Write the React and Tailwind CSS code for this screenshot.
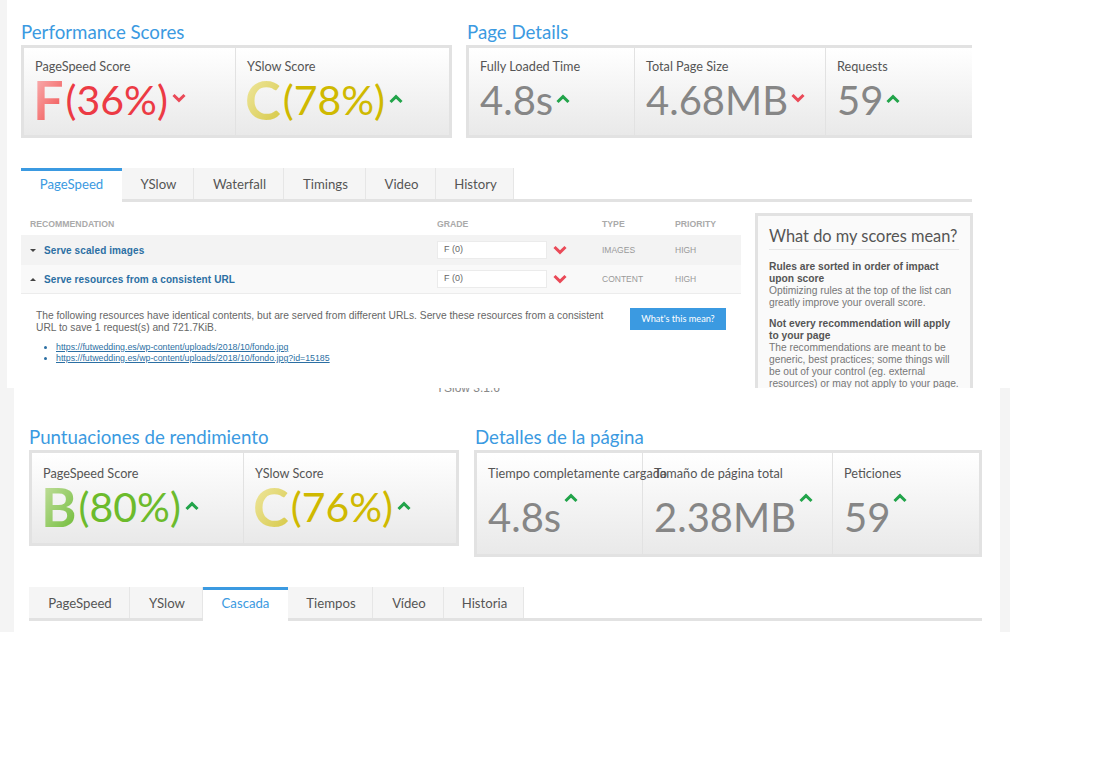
const head = { fontFamily: 'Lato, "Noto Sans", sans-serif' };
const body = { fontFamily: '"Liberation Sans", Arial, sans-serif' };

function Up({ className = "" }) {
  return (
    <svg width="14" height="10" viewBox="0 0 14 10" className={className}>
      <path d="M1.5 8 L7 2.6 L12.5 8" fill="none" stroke="#22a44a" strokeWidth="3" />
    </svg>
  );
}
function Down({ className = "" }) {
  return (
    <svg width="14" height="10" viewBox="0 0 14 10" className={className}>
      <path d="M1.5 2 L7 7.4 L12.5 2" fill="none" stroke="#ea4a58" strokeWidth="3" />
    </svg>
  );
}

function Cell({ w, label, children, last, low }) {
  return (
    <div className={`${w} shrink-0 pl-[11px] ${low ? "pt-[10px]" : "pt-[8px]"} ${last ? "" : "border-r border-[#e2e2e2]"}`}>
      <div className="text-[12.7px] leading-[20px] text-[#555] whitespace-nowrap font-normal">{label}</div>
      {children}
    </div>
  );
}

function Score({ letter, text, from, to, color, dir }) {
  return (
    <div className="flex items-center h-[50px] -mt-[1px] whitespace-nowrap">
      <span className={`text-[54px] leading-[50px] font-bold -ml-[2px] mr-[2px] bg-linear-to-br ${from} ${to} bg-clip-text text-transparent`}>{letter}</span>
      <span className={`text-[41px] leading-[50px] font-normal ${color}`}>{text}</span>
      {dir === "up" ? <Up className="ml-[4px] -mt-[3px]" /> : <Down className="ml-[4px] -mt-[5px]" />}
    </div>
  );
}

function Val({ text, dir, tall }) {
  return (
    <div className={`flex whitespace-nowrap text-[#868686] ${tall ? "items-start mt-[9px]" : "items-center -mt-[1px]"} h-[50px]`}>
      <span className="text-[40px] leading-[50px] font-normal">{text}</span>
      {dir === "up" ? <Up className={tall ? "ml-[3px] mt-[1px]" : "ml-[3px] -mt-[3px]"} /> : <Down className="ml-[3px] -mt-[5px]" />}
    </div>
  );
}

function Box({ w, h, children }) {
  return (
    <div className={`${w} ${h} border-[3px] border-[#e2e2e2] bg-linear-to-b from-white to-[#e9e9e9] flex`}>{children}</div>
  );
}

function Tabs({ items, active, widths }) {
  return (
    <div className="flex h-[34px] border-b-[3px] border-[#e2e2e2] text-[13.2px] text-[#555]">
      {items.map((t, i) => (
        <div
          key={t}
          className={
            i === active
              ? "h-[34px] border-t-[3px] border-[#3b9ae1] bg-white text-[#3b9ae1] flex items-center justify-center pb-[3px]"
              : "h-[31px] pt-[2px] pl-[2px] bg-[#f5f5f5] border-r border-[#e6e6e6] flex items-center justify-center"
          }
          style={{ width: widths[i] }}
        >
          {t}
        </div>
      ))}
    </div>
  );
}

function Row({ name, caret, type, bg, border }) {
  return (
    <div className={`h-[29.5px] flex items-center pt-[1px] ${bg} ${border ? "border-b border-[#ececec]" : ""}`}>
      <svg width="6" height="5" viewBox="0 0 6 5" className="ml-[9px] mr-[2px] shrink-0">
        {caret === "down" ? <path d="M0 1 H6 L3 4 Z" fill="#444" /> : <path d="M0 4 H6 L3 1 Z" fill="#444" />}
      </svg>
      <span className="ml-[6px] w-[393px] shrink-0 text-[10px] font-bold tracking-[0.1px] text-[#2b6fa3]">{name}</span>
      <div className="w-[110px] h-[18px] shrink-0 bg-white border border-[#ebebeb] pl-[6px] text-[9px] leading-[15px] text-[#666]">F (0)</div>
      <Down className="ml-[6px] shrink-0" />
      <span className="ml-[35px] w-[73px] shrink-0 text-[8.5px] text-[#999]">{type}</span>
      <span className="text-[8.5px] text-[#999]">HIGH</span>
    </div>
  );
}

function Para({ title, text }) {
  return (
    <div className="mb-[9px]">
      <div className="font-bold text-[#555]">{title}</div>
      <div>{text}</div>
    </div>
  );
}

export default function App() {
  return (
    <div className="w-[1100px] h-[758px] bg-white overflow-hidden" style={head}>
      {/* upper capture */}
      <div className="h-[388px] flex overflow-hidden">
        <div className="w-[7px] shrink-0 bg-[#f4f4f4]" />
        <div className="w-[965px] pl-[14px] pt-[20px] shrink-0">
          <div className="flex gap-[14px]">
            <div>
              <h2 className="text-[18.7px] leading-[24px] pb-[1px] font-normal text-[#3b9ae1]">Performance Scores</h2>
              <Box w="w-[431px]" h="h-[93px]">
                <Cell w="w-[212px]" label="PageSpeed Score">
                  <Score letter="F" text="(36%)" from="from-[#f7b5b8]" to="to-[#ec3a44]" color="text-[#ec3a44]" dir="down" />
                </Cell>
                <Cell w="w-[213px]" label="YSlow Score" last>
                  <Score letter="C" text="(78%)" from="from-[#f0e8a0]" to="to-[#d6c840]" color="text-[#cfb900]" dir="up" />
                </Cell>
              </Box>
            </div>
            <div>
              <h2 className="text-[18.7px] leading-[24px] pb-[1px] ml-[1px] font-normal text-[#3b9ae1]">Page Details</h2>
              <div className="w-[506px] h-[93px] border-y-[3px] border-l-[3px] border-[#e2e2e2] bg-linear-to-b from-white to-[#e9e9e9] flex">
                <Cell w="w-[166px]" label="Fully Loaded Time"><Val text="4.8s" dir="up" /></Cell>
                <Cell w="w-[191px]" label="Total Page Size"><Val text="4.68MB" dir="down" /></Cell>
                <Cell w="w-[146px]" label="Requests" last><Val text="59" dir="up" /></Cell>
              </div>
            </div>
          </div>

          <div className="mt-[30px]">
            <Tabs items={["PageSpeed", "YSlow", "Waterfall", "Timings", "Video", "History"]} active={0} widths={[101, 72, 90, 82, 70, 78]} />
          </div>

          <div className="flex mt-[11px]" style={body}>
            <div className="w-[720px] shrink-0">
              <div className="flex items-center h-[22px] pt-[2px] text-[8.7px] font-bold text-[#aaa]">
                <span className="ml-[9px] w-[407px]">RECOMMENDATION</span>
                <span className="w-[165px]">GRADE</span>
                <span className="w-[73px]">TYPE</span>
                <span>PRIORITY</span>
              </div>
              <Row name="Serve scaled images" caret="down" type="IMAGES" bg="bg-[#f3f3f3]" />
              <Row name="Serve resources from a consistent URL" caret="up" type="CONTENT" bg="bg-[#f9f9f9]" border />
              <div className="flex pl-[15px] pt-[16px]">
                <div className="w-[580px] shrink-0 text-[10.25px] leading-[12px] text-[#666]">
                  <p>The following resources have identical contents, but are served from different URLs. Serve these resources from a consistent URL to save 1 request(s) and 721.7KiB.</p>
                  <ul className="list-disc ml-[20px] mt-[8px] text-[8.8px] leading-[11px] text-[#2b6fa3] underline">
                    <li>https://futwedding.es/wp-content/uploads/2018/10/fondo.jpg</li>
                    <li>https://futwedding.es/wp-content/uploads/2018/10/fondo.jpg?id=15185</li>
                  </ul>
                </div>
                <div className="ml-[14px] w-[96px] h-[22px] -mt-[2px] shrink-0 bg-[#3b9ae1] text-white text-[9.2px] flex items-center justify-center" style={head}>What's this mean?</div>
              </div>
            </div>
            <div className="ml-[14px] w-[218px] h-[190px] border-[3px] border-[#e2e2e2] border-b-0 bg-[#fafafa] px-[11px] pt-[8px] text-[10.25px] leading-[12px] text-[#777] shrink-0">
              <div className="text-[16.4px] leading-[24px] font-normal text-[#555] border-b border-[#e6e6e6] pb-[1px] mb-[11px] whitespace-nowrap" style={head}>What do my scores mean?</div>
              <Para title="Rules are sorted in order of impact upon score" text="Optimizing rules at the top of the list can greatly improve your overall score." />
              <Para title="Not every recommendation will apply to your page" text="The recommendations are meant to be generic, best practices; some things will be out of your control (eg. external resources) or may not apply to your page." />
            </div>
          </div>
        </div>
      </div>

      {/* lower capture */}
      <div className="relative h-[244px] flex overflow-hidden">
        <div className="w-[14px] shrink-0 bg-[#f4f4f4]" />
        <div className="w-[986px] shrink-0 pl-[15px] pt-[37px] bg-white relative">
          <div className="absolute left-[422px] -top-[7px] text-[12px] leading-[14px] text-[#888]" style={body}>YSlow 3.1.6</div>
          <div className="flex gap-[15px]">
            <div>
              <h2 className="text-[18.7px] leading-[24px] pb-[1px] font-normal text-[#3b9ae1]">Puntuaciones de rendimiento</h2>
              <Box w="w-[430px]" h="h-[96px]">
                <Cell w="w-[212px]" label="PageSpeed Score" low>
                  <Score letter="B" text="(80%)" from="from-[#c6e0a0]" to="to-[#6cbb2c]" color="text-[#6cbb2c]" dir="up" />
                </Cell>
                <Cell w="w-[212px]" label="YSlow Score" last low>
                  <Score letter="C" text="(76%)" from="from-[#f0e8a0]" to="to-[#d6c840]" color="text-[#cfb900]" dir="up" />
                </Cell>
              </Box>
            </div>
            <div>
              <h2 className="text-[18.7px] leading-[24px] pb-[1px] ml-[1px] font-normal text-[#3b9ae1]">Detalles de la página</h2>
              <Box w="w-[508px]" h="h-[107px]">
                <Cell w="w-[166px]" low label="Tiempo completamente cargado"><Val text="4.8s" dir="up" tall /></Cell>
                <Cell w="w-[190px]" low label="Tamaño de página total"><Val text="2.38MB" dir="up" tall /></Cell>
                <Cell w="w-[146px]" low label="Peticiones" last><Val text="59" dir="up" tall /></Cell>
              </Box>
            </div>
          </div>
          <div className="mt-[30px] w-[953px]">
            <Tabs items={["PageSpeed", "YSlow", "Cascada", "Tiempos", "Vídeo", "Historia"]} active={2} widths={[101, 73, 85, 85, 71, 80]} />
          </div>
        </div>
        <div className="w-[10px] shrink-0 bg-[#f4f4f4]" />
      </div>
    </div>
  );
}
